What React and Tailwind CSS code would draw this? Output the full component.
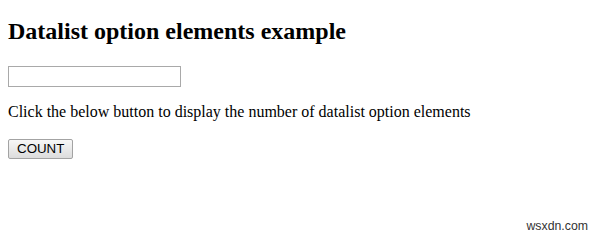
export default function App() {
  return (
    <div className="w-[600px] h-[239px] bg-white px-2 flex flex-col font-['Liberation_Serif',serif] text-black">
      {/* Heading */}
      <h2 className="mt-[18px] text-[24px] leading-[27px] font-bold">
        Datalist option elements example
      </h2>

      {/* Input with datalist */}
      <input
        list="items"
        className="mt-[21px] w-[173px] h-[21px] border border-[#a9a9a9] bg-white outline-none"
      />

      <p className="mt-[16px] text-[16px] leading-[18px]">
        Click the below button to display the number of datalist option elements
      </p>

      <div className="mt-[15px]">
        <button className="h-[20px] px-[8px] border border-[#a3a3a3] rounded-[2px] bg-gradient-to-b from-[#f7f7f7] to-[#dcdcdc] font-['Liberation_Sans',Arial,sans-serif] text-[13.33px] leading-[18px] text-black">
          COUNT
        </button>
      </div>

      {/* Watermark */}
      <div className="mt-auto mb-[5px] flex justify-end pr-[4px]">
        <span className="font-['Liberation_Sans',Arial,sans-serif] text-[12.3px] leading-[15px] text-[#333]">
          wsxdn.com
        </span>
      </div>
    </div>
  );
}
